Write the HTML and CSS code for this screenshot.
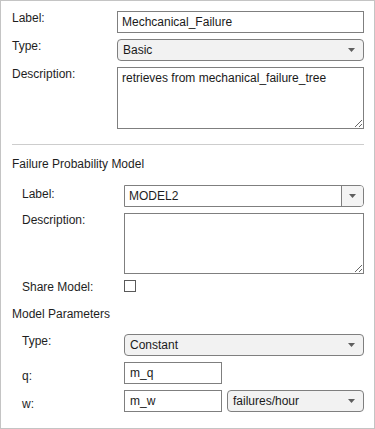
FILE: index.html
```html
<!DOCTYPE html>
<html lang="en">
<head>
    <meta charset="UTF-8">
    <meta name="viewport" content="width=device-width, initial-scale=1.0">
    <title>Basic Event</title>
    <link rel="stylesheet" href="styles.css">
</head>
<body>

    <div class="panel">
        <div class="form-grid top">
            <label>Label:</label>
            <input class="field" type="text" value="Mechcanical_Failure">

            <label>Type:</label>
            <div class="dropdown">
                <span>Basic</span>
                <svg width="7" height="4" viewBox="0 0 7 4"><polygon points="0,0 7,0 3.5,4"/></svg>
            </div>

            <label>Description:</label>
            <textarea class="field area">retrieves from mechanical_failure_tree</textarea>
        </div>

        <div class="divider"></div>

        <div class="section-title">Failure Probability Model</div>
        <div class="form-grid sub model">
            <label>Label:</label>
            <div class="combo">
                <span class="combo-value">MODEL2</span>
                <span class="combo-button">
                    <svg width="7" height="4" viewBox="0 0 7 4"><polygon points="0,0 7,0 3.5,4"/></svg>
                </span>
            </div>

            <label>Description:</label>
            <textarea class="field area short"></textarea>

            <label>Share Model:</label>
            <div class="check-row"><span class="checkbox"></span></div>
        </div>

        <div class="section-title params-title">Model Parameters</div>
        <div class="form-grid sub">
            <label>Type:</label>
            <div class="dropdown">
                <span>Constant</span>
                <svg width="7" height="4" viewBox="0 0 7 4"><polygon points="0,0 7,0 3.5,4"/></svg>
            </div>

            <label class="low">q:</label>
            <div class="param-row">
                <input class="field param" type="text" value="m_q">
            </div>

            <label class="low">w:</label>
            <div class="param-row">
                <input class="field param" type="text" value="m_w">
                <div class="dropdown units">
                    <span>failures/hour</span>
                    <svg width="7" height="4" viewBox="0 0 7 4"><polygon points="0,0 7,0 3.5,4"/></svg>
                </div>
            </div>
        </div>
    </div>

</body>
</html>
```

FILE: styles.css
```css
body {
    margin: 0;
    font-family: "Liberation Sans", Arial, sans-serif;
    font-size: 12px;
    color: #1e1e1e;
    background-color: #ffffff;
}
.panel {
    box-sizing: border-box;
    width: 375px;
    height: 429px;
    border: 1px solid #c4c4c4;
    padding: 10px 10px 0 11px;
}
.form-grid {
    display: grid;
    row-gap: 6px;
    align-items: start;
}
.form-grid.top {
    grid-template-columns: 105px 247px;
}
.form-grid.sub {
    grid-template-columns: 102px 240px;
    margin-left: 10px;
    margin-top: 14px;
}
.form-grid label {
    line-height: 14px;
}
.form-grid label.low {
    padding-top: 7px;
}
.model label:first-child {
    padding-top: 2px;
}
.field {
    box-sizing: border-box;
    height: 22px;
    margin: 0;
    padding: 0 4px;
    border: 1px solid #7f7f7f;
    border-radius: 0;
    font-family: "Liberation Sans", Arial, sans-serif;
    font-size: 12px;
    color: #1a1a1a;
    outline: none;
    background-color: #ffffff;
}
.area {
    display: block;
    width: 100%;
    height: 62px;
    padding: 3px 4px;
    line-height: 14px;
}
.area.short {
    height: 61px;
}
.top .field {
    width: 100%;
}
.dropdown {
    box-sizing: border-box;
    height: 22px;
    display: flex;
    align-items: center;
    justify-content: space-between;
    padding: 0 8px 0 5px;
    border: 1px solid #7f7f7f;
    border-radius: 4px;
    background-color: #f2f2f2;
    color: #1a1a1a;
}
.dropdown svg, .combo svg {
    fill: #5f5f5f;
}
.divider {
    height: 1px;
    margin-top: 15px;
    background-color: #cdcdcd;
}
.section-title {
    margin-top: 12px;
    line-height: 14px;
}
.params-title {
    margin-top: 13px;
}
.params-title + .form-grid {
    margin-top: 13px;
}
.combo {
    box-sizing: border-box;
    height: 22px;
    display: flex;
    border: 1px solid #7f7f7f;
    border-radius: 0 4px 4px 0;
    overflow: hidden;
}
.combo-value {
    flex: 1;
    padding-left: 4px;
    line-height: 20px;
    background-color: #ffffff;
}
.combo-button {
    width: 21px;
    display: flex;
    align-items: center;
    justify-content: center;
    border-left: 1px solid #7f7f7f;
    background-color: #f4f4f4;
}
.check-row {
    height: 14px;
}
.checkbox {
    display: block;
    box-sizing: border-box;
    width: 12px;
    height: 12px;
    border: 1px solid #5a5a5a;
    background-color: #ffffff;
}
.param-row {
    display: flex;
    gap: 5px;
}
.param {
    width: 98px;
    padding-left: 5px;
}
.units {
    flex: 1;
}
```
